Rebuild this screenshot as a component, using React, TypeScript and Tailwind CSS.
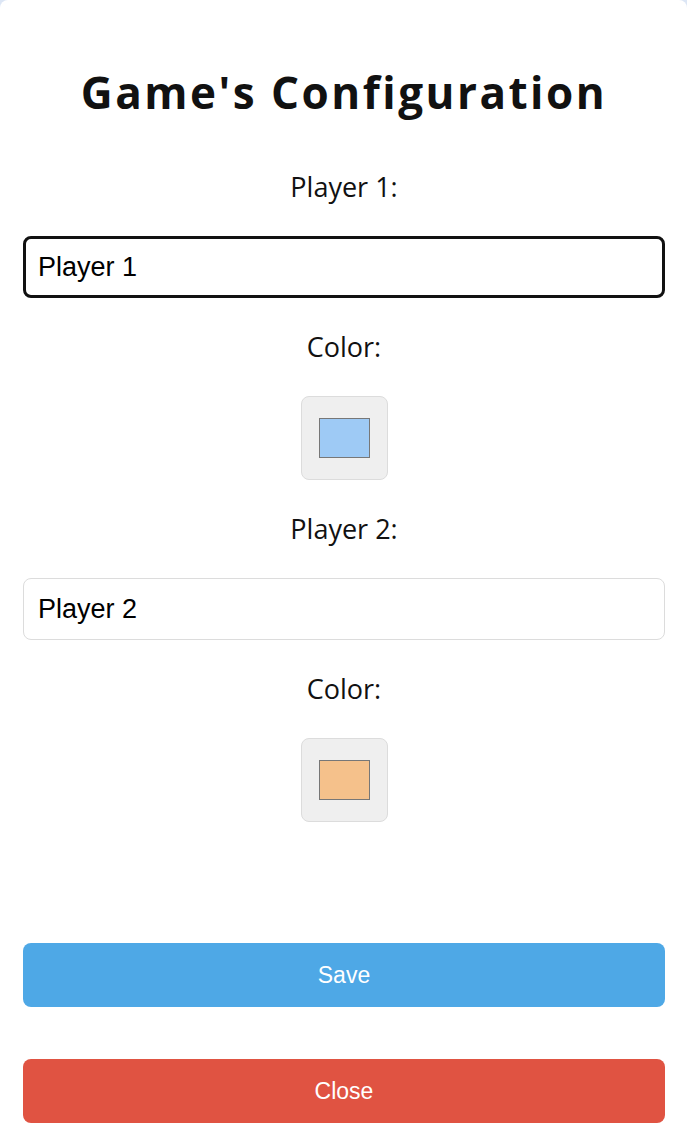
import React from "react";

function Label({ children }: { children: React.ReactNode }) {
  return (
    <div className="h-[98px] flex items-center justify-center text-[27px] text-[#111] font-['Open_Sans',sans-serif]">
      {children}
    </div>
  );
}

function Swatch({ color }: { color: string }) {
  return (
    <div className="flex justify-center">
      <div className="w-[87px] h-[84px] rounded-[8px] bg-[#efefef] border border-[#dcdcdc] flex items-center justify-center">
        <div className="w-[51px] h-[40px] border border-[#777]" style={{ backgroundColor: color }} />
      </div>
    </div>
  );
}

export default function App() {
  return (
    <div className="bg-[#dce6f5] min-h-[1145px]">
      <div className="bg-white rounded-t-[8px] min-h-[1145px] pl-[23px] pr-[22px] flex flex-col">
        <h1 className="mt-[60px] h-[64px] mb-[14px] flex items-center justify-center text-[44px] font-bold tracking-[2.5px] text-[#111] font-['Open_Sans',sans-serif]">
          Game's Configuration
        </h1>
        <Label>Player 1:</Label>
        <input
          className="h-[62px] w-full rounded-[8px] border-[3px] border-[#111] px-[12px] text-[27px] text-black font-['Liberation_Sans',Arial,sans-serif] outline-none"
          defaultValue="Player 1"
        />
        <Label>Color:</Label>
        <Swatch color="#9ecaf5" />
        <Label>Player 2:</Label>
        <input
          className="h-[62px] w-full rounded-[8px] border border-[#dcdcdc] px-[14px] text-[27px] text-black font-['Liberation_Sans',Arial,sans-serif] outline-none"
          defaultValue="Player 2"
        />
        <Label>Color:</Label>
        <Swatch color="#f5c18b" />
        <button className="mt-[121px] h-[64px] w-full rounded-[8px] bg-[#4ea8e6] text-white text-[23px] font-['Liberation_Sans',Arial,sans-serif]">
          Save
        </button>
        <button className="mt-[52px] h-[64px] w-full rounded-[8px] bg-[#e05342] text-white text-[23px] font-['Liberation_Sans',Arial,sans-serif]">
          Close
        </button>
      </div>
    </div>
  );
}
